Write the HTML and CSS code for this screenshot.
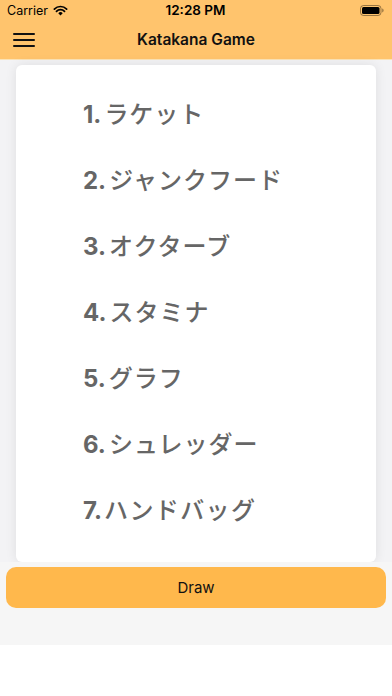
FILE: index.html
```html
<!DOCTYPE html>
<html lang="ja">
<head>
<meta charset="utf-8">
<title>Katakana Game</title>
<link rel="stylesheet" href="styles.css">
</head>
<body>
<div class="screen">
  <header class="header">
    <div class="status">
      <div class="status-left">
        <span class="carrier">Carrier</span>
        <svg class="wifi" width="15" height="11" viewBox="0 0 16 12">
          <path d="M8 11.5 L5.6 8.9 A3.4 3.4 0 0 1 10.4 8.9 Z" fill="#000"/>
          <path d="M3.6 6.9 A6.2 6.2 0 0 1 12.4 6.9" stroke="#000" stroke-width="1.9" fill="none" stroke-linecap="round"/>
          <path d="M1.3 4.4 A9.5 9.5 0 0 1 14.7 4.4" stroke="#000" stroke-width="1.9" fill="none" stroke-linecap="round"/>
        </svg>
      </div>
      <span class="time">12:28 PM</span>
      <div class="status-right">
        <svg class="battery" width="24" height="11" viewBox="0 0 24 11">
          <rect x="0.5" y="0.5" width="20.5" height="10" rx="3" fill="none" stroke="#000" stroke-opacity="0.4"/>
          <rect x="2" y="2" width="17.5" height="7" rx="1.5" fill="#000"/>
          <path d="M22.2 3.6 Q23.6 3.8 23.6 5.5 Q23.6 7.2 22.2 7.4 Z" fill="#000" fill-opacity="0.4"/>
        </svg>
      </div>
    </div>
    <div class="nav">
      <div class="menu" aria-label="menu">
        <span class="bar"></span><span class="bar"></span><span class="bar"></span>
      </div>
      <h1 class="title">Katakana Game</h1>
    </div>
  </header>
  <main class="main">
    <section class="card">
      <ol class="words">
        <li class="word"><span class="num">1.</span>ラケット</li>
        <li class="word"><span class="num">2.</span>ジャンクフード</li>
        <li class="word"><span class="num">3.</span>オクターブ</li>
        <li class="word"><span class="num">4.</span>スタミナ</li>
        <li class="word"><span class="num">5.</span>グラフ</li>
        <li class="word"><span class="num">6.</span>シュレッダー</li>
        <li class="word word-wide"><span class="num num-tight">7.</span>ハンドバッグ</li>
      </ol>
    </section>
    <div class="footer">
      <button class="draw">Draw</button>
    </div>
  </main>
</div>
</body>
</html>
```
FILE: styles.css
```css
html, body {
  margin: 0;
  padding: 0;
  background: #ffffff;
}
body {
  font-family: Inter, "Liberation Sans", "Noto Sans CJK JP", sans-serif;
  color: #000;
}
.screen {
  width: 392px;
  height: 696px;
  overflow: hidden;
  display: flex;
  flex-direction: column;
}
.header {
  background: #ffc46d;
  height: 60px;
  display: flex;
  flex-direction: column;
  flex-shrink: 0;
  border-bottom: 1px solid #fbe3b6;
  box-sizing: border-box;
}
.status {
  height: 21px;
  display: flex;
  align-items: center;
  justify-content: space-between;
  padding: 0 8px 0 7px;
  font-size: 12.5px;
}
.status-left {
  display: flex;
  align-items: center;
  gap: 5px;
  width: 80px;
}
.carrier {
  font-weight: 400;
}
.time {
  font-weight: 600;
  font-size: 13.5px;
}
.status-right {
  width: 80px;
  display: flex;
  justify-content: flex-end;
}
.nav {
  height: 39px;
  display: flex;
  align-items: center;
  justify-content: center;
  position: relative;
}
.menu {
  position: absolute;
  left: 13px;
  top: 12px;
  width: 22px;
  display: flex;
  flex-direction: column;
  gap: 4px;
}
.bar {
  display: block;
  height: 2px;
  background: #111;
  border-radius: 1px;
}
.title {
  margin: 0;
  font-size: 15.5px;
  font-weight: 600;
  color: #111;
}
.main {
  background: #f3f3f5;
  height: 585px;
  display: flex;
  flex-direction: column;
  flex-shrink: 0;
}
.card {
  margin: 5px 16px 0;
  height: 497px;
  background: #ffffff;
  border-radius: 6px;
  box-shadow: 0 0 12px rgba(0, 0, 0, 0.09);
  flex-shrink: 0;
}
.words {
  list-style: none;
  margin: 0;
  padding: 17px 0 0 67px;
  font-family: Inter, "Noto Sans CJK JP", sans-serif;
  font-size: 24px;
  line-height: 66px;
  color: #666666;
  font-weight: 500;
  letter-spacing: 1px;
}
.word-wide {
  letter-spacing: 1.4px;
}
.num {
  font-weight: 700;
  letter-spacing: 0;
  margin-right: 3px;
}
.num-tight {
  margin-right: 2px;
}
.footer {
  flex: 1;
  background: #f6f6f6;
  padding: 5px 6px 0;
}
.draw {
  width: 100%;
  height: 41px;
  border: none;
  border-radius: 10px;
  background: #ffb84c;
  font-family: Inter, "Liberation Sans", sans-serif;
  font-size: 15px;
  color: #111;
  padding: 0;
}
```
